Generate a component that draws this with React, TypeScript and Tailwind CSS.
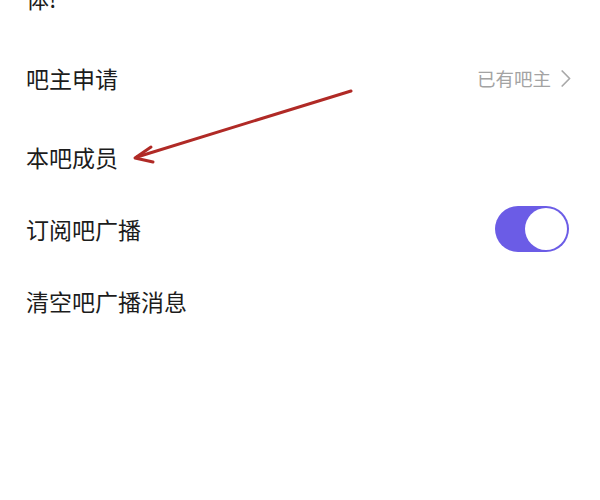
const font = { fontFamily: '"Noto Sans CJK SC", "Noto Sans", sans-serif' };

const Toggle = () => (
  <div className="mr-[2px] w-[74px] h-[46px] rounded-full bg-[#6b5ce6] p-[2px] flex justify-end">
    <div className="w-[42px] h-[42px] rounded-full bg-white" />
  </div>
);

const Row = ({ label, right, className = '' }: { label: string; right?: React.ReactNode; className?: string }) => (
  <div className={`h-[72px] flex items-center justify-between pl-[26px] pr-[29px] ${className}`}>
    <span className="text-[23px] text-[#1c1c1c] leading-none">{label}</span>
    {right}
  </div>
);

export default function App() {
  return (
    <div className="relative w-[600px] h-[500px] bg-white overflow-hidden" style={font}>
      {/* text of the previous section, cut off at the top */}
      <div className="h-[42px] overflow-hidden">
        <p className="pl-[26px] -mt-[13px] text-[23px] leading-[23px] text-[#1c1c1c]">体!</p>
      </div>

      <Row
        label="吧主申请"
        className="mb-[7px]"
        right={
          <span className="flex items-center gap-[10px] text-[18.5px] text-[#a3a3a3] leading-none">
            已有吧主
            <svg width="10" height="17" viewBox="0 0 10 17" fill="none">
              <path d="M1.2 1 L8.6 8.5 L1.2 16" stroke="#a8a8a8" strokeWidth="1.7" strokeLinecap="round" strokeLinejoin="round" />
            </svg>
          </span>
        }
      />
      <Row label="本吧成员" />
      <Row label="订阅吧广播" right={<Toggle />} />
      <Row label="清空吧广播消息" />

      {/* annotation arrow */}
      <svg className="absolute inset-0 pointer-events-none" width="600" height="500" viewBox="0 0 600 500">
        <path d="M351 91 L137 157" stroke="#b02a26" strokeWidth="3" strokeLinecap="round" fill="none" />
        <path d="M151 147 L135 158 L153 162" stroke="#b02a26" strokeWidth="3" strokeLinecap="round" strokeLinejoin="round" fill="none" />
      </svg>
    </div>
  );
}
